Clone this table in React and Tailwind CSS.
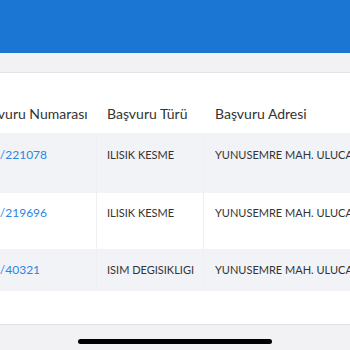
export default function App() {
  const rows = [
    { no: "2023/221078", type: "ILISIK KESME", addr: "YUNUSEMRE MAH. ULUCAK CAD. NO:12", bg: "bg-[#f2f3f7]", h: "h-[60px] pt-[15px]" },
    { no: "2023/219696", type: "ILISIK KESME", addr: "YUNUSEMRE MAH. ULUCAK CAD. NO:12", bg: "bg-white", h: "h-[56px] pt-[13px]" },
    { no: "2023/40321", type: "ISIM DEGISIKLIGI", addr: "YUNUSEMRE MAH. ULUCAK CAD. NO:12", bg: "bg-[#f2f3f7]", h: "h-[42px] pt-[14px]" },
  ];
  return (
    <div className="w-[350px] h-[350px] overflow-hidden bg-white flex flex-col" style={{ fontFamily: "Lato, 'Open Sans', sans-serif" }}>
      <div className="h-[53px] bg-[#1a76d2] shrink-0" />
      <div className="h-[20px] bg-[#f2f2f4] border-b border-[#e2e3e6] shrink-0" />
      <div className="overflow-hidden shrink-0">
        <div className="ml-[-36px] w-[600px] flex flex-col">
          <div className="h-[20px]" />
          <div className="flex h-[40px] items-center text-[14px] text-[#333]">
            <div className="w-[133px] pl-[12px] whitespace-nowrap">Başvuru Numarası</div>
            <div className="w-[107px] pl-[10px] whitespace-nowrap">Başvuru Türü</div>
            <div className="flex-1 pl-[11px] whitespace-nowrap">Başvuru Adresi</div>
          </div>
          {rows.map((r, i) => (
            <div key={i} className={`flex ${r.bg}`}>
              <div className={`w-[133px] pl-[8px] ${r.h} border-r border-[#eef0f3] text-[12px] leading-[14px] text-[#2a86df] whitespace-nowrap`}>{r.no}</div>
              <div className={`w-[107px] pl-[10px] ${r.h} border-r border-[#eef0f3] text-[11px] leading-[14px] text-[#333] whitespace-nowrap`}>{r.type}</div>
              <div className={`flex-1 pl-[11px] ${r.h} text-[11px] leading-[14px] text-[#333] whitespace-nowrap`}>{r.addr}</div>
            </div>
          ))}
        </div>
      </div>
      <div className="h-[33px] bg-white shrink-0" />
      <div className="flex-1 bg-[#f2f2f4] border-t border-[#e0e0e2] flex justify-center pt-[14px]">
        <div className="w-[194px] h-[5px] rounded-full bg-black" />
      </div>
    </div>
  );
}
